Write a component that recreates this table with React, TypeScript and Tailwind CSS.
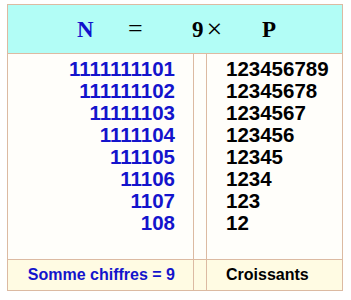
import React from "react";

const left = ["1111111101", "111111102", "11111103", "1111104", "111105", "11106", "1107", "108"];
const right = ["123456789", "12345678", "1234567", "123456", "12345", "1234", "123", "12"];

export default function App() {
  return (
    <div className="w-[351px] h-[300px] bg-white pt-[4px] pl-[7px]" style={{ fontFamily: '"Liberation Sans", Arial, sans-serif' }}>
      <div className="w-[336px] border border-[#dcbaa2] flex flex-col">
        <div
          className="h-[49px] bg-[#b2fdf6] border-b border-[#dcbaa2] flex items-center pl-[69px] leading-none"
          style={{ fontFamily: '"Liberation Serif", "Times New Roman", serif' }}
        >
          <span className="w-[51px] text-[23px] font-bold text-[#1111cc]">N</span>
          <span className="w-[64px] text-[26px] text-black">=</span>
          <span className="w-[70px] flex items-center text-black">
            <span className="text-[23px] font-bold">9</span>
            <span className="ml-[3px] text-[28px]">×</span>
          </span>
          <span className="text-[23px] font-bold text-black">P</span>
        </div>
        <div className="flex h-[206px] bg-[#fffefa] border-b border-[#dcbaa2]">
          <div className="w-[186px] border-r border-[#dcbaa2] pt-[4px] pr-[18px] flex flex-col items-end">
            {left.map((t) => (
              <div key={t} className="h-[22px] leading-[22px] text-[20.5px] font-bold text-[#1414cc]">
                {t}
              </div>
            ))}
          </div>
          <div className="w-[13px] border-r border-[#dcbaa2]" />
          <div className="flex-1 pt-[4px] pl-[19px] flex flex-col">
            {right.map((t) => (
              <div key={t} className="h-[22px] leading-[22px] text-[20.5px] font-bold text-black">
                {t}
              </div>
            ))}
          </div>
        </div>
        <div className="flex h-[30px] bg-[#fffbe3]">
          <div className="w-[186px] border-r border-[#dcbaa2] pr-[18px] flex items-center justify-end text-[16px] font-bold text-[#1414cc]">
            Somme chiffres = 9
          </div>
          <div className="w-[13px] border-r border-[#dcbaa2]" />
          <div className="flex-1 pl-[19px] flex items-center text-[16px] font-bold text-black">Croissants</div>
        </div>
      </div>
    </div>
  );
}
